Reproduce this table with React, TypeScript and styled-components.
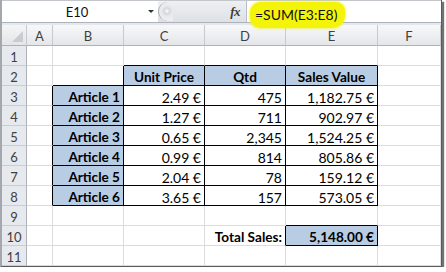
import styled, { createGlobalStyle } from "styled-components";

type Align = "left" | "right" | "center";

type CellData = {
  text: string;
  bold?: boolean;
  align?: Align;
  fill?: boolean;
  boxed?: boolean;
};

const COLUMNS = ["A", "B", "C", "D", "E", "F"];
const ROW_COUNT = 11;

const prices = [
  ["2.49 €", "475", "1,182.75 €"],
  ["1.27 €", "711", "902.97 €"],
  ["0.65 €", "2,345", "1,524.25 €"],
  ["0.99 €", "814", "805.86 €"],
  ["2.04 €", "78", "159.12 €"],
  ["3.65 €", "157", "573.05 €"],
];

const sheet: Record<string, CellData> = {
  C2: { text: "Unit Price", bold: true, align: "center", fill: true, boxed: true },
  D2: { text: "Qtd", bold: true, align: "center", fill: true, boxed: true },
  E2: { text: "Sales Value", bold: true, align: "center", fill: true, boxed: true },
  D10: { text: "Total Sales:", bold: true, align: "right" },
  E10: { text: "5,148.00 €", bold: true, align: "right", fill: true, boxed: true },
};

prices.forEach((row, i) => {
  const r = i + 3;
  sheet["B" + r] = { text: `Article ${i + 1}`, bold: true, align: "right", fill: true, boxed: true };
  sheet["C" + r] = { text: row[0], align: "right", boxed: true };
  sheet["D" + r] = { text: row[1], align: "right", boxed: true };
  sheet["E" + r] = { text: row[2], align: "right", boxed: true };
});

const isBoxed = (col: number, row: number) =>
  !!sheet[(COLUMNS[col] ?? "") + row]?.boxed;

const GlobalStyle = createGlobalStyle`
  body {
    margin: 0;
    background: #fff;
  }
`;

const Frame = styled.div`
  width: 439px;
  border-left: 2px solid #a4a8ad;
  border-right: 1px solid #5a5a5a;
  border-bottom: 1px solid #5a5a5a;
  box-shadow: 2px 2px 1px rgba(0, 0, 0, 0.55);
  font-family: Lato, "Liberation Sans", sans-serif;
`;

const FormulaBar = styled.div`
  display: flex;
  height: 21px;
  border-top: 1px solid #c3c7cc;
  background: #fff;
  position: relative;
  z-index: 1;
`;

const NameBox = styled.div`
  width: 156px;
  display: flex;
  align-items: center;
  font-size: 13px;
  color: #111;
`;

const NameText = styled.span`
  flex: 1;
  text-align: center;
  padding-left: 4px;
`;

const Arrow = styled.span`
  width: 0;
  height: 0;
  margin-right: 4px;
  border-left: 3px solid transparent;
  border-right: 3px solid transparent;
  border-top: 3px solid #333;
`;

const Splitter = styled.div`
  width: 88px;
  display: flex;
  align-items: center;
  justify-content: space-between;
  background: linear-gradient(#eef0f3, #dde1e6);
  border-right: 1px solid #b9bec4;
`;

const Knob = styled.div`
  width: 14px;
  height: 19px;
  border-radius: 10px 0 0 10px;
  border-left: 1px solid #a9adb3;
  background: radial-gradient(circle at 8px 9px, #ffffff 0, #d4d6d9 3px, #e6e8eb 5px, #eceef1 9px);
`;

const Fx = styled.span`
  font-family: "Liberation Serif", serif;
  font-style: italic;
  font-weight: bold;
  font-size: 13px;
  color: #3d3d3d;
  margin-right: 6px;
  letter-spacing: -0.5px;
`;

const FormulaInput = styled.div`
  flex: 1;
  display: flex;
  align-items: flex-start;
  padding-left: 3px;
`;

const Highlight = styled.span`
  margin-top: 1px;
  height: 24px;
  display: inline-flex;
  align-items: center;
  padding: 0 8px 2px 5px;
  background: #f4f40a;
  border-radius: 11px 9px 13px 10px;
  box-shadow: 0 0 2px 1px rgba(244, 244, 10, 0.6);
  font-size: 14px;
  color: #111;
`;

const BarGap = styled.div`
  height: 2px;
  border-top: 1px solid #aeb3b9;
  background: #e4e7eb;
`;

const Grid = styled.div`
  display: grid;
  grid-template-columns: 25px 26px 71px 81px 81px 92px 63px;
  grid-template-rows: 21px repeat(${ROW_COUNT}, 20px);
`;

const Corner = styled.div`
  position: relative;
  background: linear-gradient(#f4f5f6, #e3e5e8);
  border-right: 1px solid #c6c9cd;
  border-bottom: 1px solid #aeb2b8;

  &::after {
    content: "";
    position: absolute;
    right: 3px;
    bottom: 3px;
    border-left: 11px solid transparent;
    border-bottom: 11px solid #c9cbcd;
  }
`;

const ColHead = styled.div`
  display: flex;
  align-items: center;
  justify-content: center;
  padding-top: 1px;
  background: linear-gradient(#f7f8f9, #e4e6e9);
  border-right: 1px solid #c6c9cd;
  border-bottom: 1px solid #aeb2b8;
  font-size: 13px;
  color: #3f3f3f;
`;

const RowHead = styled.div`
  display: flex;
  align-items: flex-end;
  justify-content: center;
  background: #e6e9ee;
  border-right: 1px solid #aeb2b8;
  border-bottom: 1px solid #c9ccd1;
  font-size: 13px;
  line-height: 16px;
  color: #3f3f3f;
`;

const Cell = styled.div<{
  $align: Align;
  $bold?: boolean;
  $fill?: boolean;
  $rightDark: boolean;
  $bottomDark: boolean;
}>`
  display: flex;
  align-items: flex-end;
  justify-content: ${(p) =>
    p.$align === "right" ? "flex-end" : p.$align === "center" ? "center" : "flex-start"};
  padding: 0 3px;
  overflow: visible;
  white-space: nowrap;
  background: ${(p) => (p.$fill ? "#b8cce4" : "#fff")};
  border-right: 1px solid ${(p) => (p.$rightDark ? "#000" : "#dadcdd")};
  border-bottom: 1px solid ${(p) => (p.$bottomDark ? "#000" : "#dadcdd")};
  font-size: ${(p) => (p.$bold ? "13.6px" : "14px")};
  line-height: 15px;
  font-weight: ${(p) => (p.$bold ? 700 : 400)};
  color: #000;
`;

function App() {
  const rows = Array.from({ length: ROW_COUNT }, (_, i) => i + 1);

  return (
    <>
      <GlobalStyle />
      <Frame>
        <FormulaBar>
          <NameBox>
            <NameText>E10</NameText>
            <Arrow />
          </NameBox>
          <Splitter>
            <Knob />
            <Fx>fx</Fx>
          </Splitter>
          <FormulaInput>
            <Highlight>=SUM(E3:E8)</Highlight>
          </FormulaInput>
        </FormulaBar>
        <BarGap />
        <Grid>
          <Corner />
          {COLUMNS.map((c) => (
            <ColHead key={c}>{c}</ColHead>
          ))}
          {rows.map((r) => [
            <RowHead key={"h" + r}>{r}</RowHead>,
            ...COLUMNS.map((c, ci) => {
              const data = sheet[c + r];
              return (
                <Cell
                  key={c + r}
                  $align={data?.align ?? "left"}
                  $bold={data?.bold}
                  $fill={data?.fill}
                  $rightDark={isBoxed(ci, r) || isBoxed(ci + 1, r)}
                  $bottomDark={isBoxed(ci, r) || isBoxed(ci, r + 1)}
                >
                  {data?.text}
                </Cell>
              );
            }),
          ])}
        </Grid>
      </Frame>
    </>
  );
}

export default App;
